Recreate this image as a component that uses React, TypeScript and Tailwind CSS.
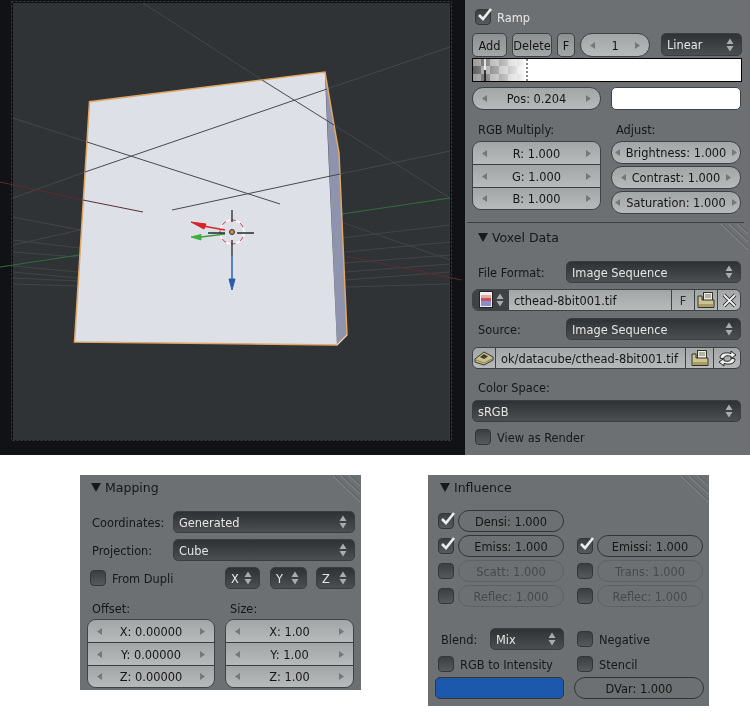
import React from "react";

const numBg = "bg-linear-to-b from-[#a3a6a7] to-[#b7babb]";
const btnBg = "bg-linear-to-b from-[#8e9192] to-[#a4a7a8]";
const ddBg = "bg-linear-to-b from-[#2f3234] to-[#4c4f51]";

function Updown({ color = "#a9acad" }: { color?: string }) {
  return (
    <svg width="8" height="14" viewBox="0 0 8 14" className="shrink-0">
      <path d="M4 0.5 L7.5 6 L0.5 6 Z M4 13.5 L7.5 8 L0.5 8 Z" fill={color} />
    </svg>
  );
}

function Dropdown({ label, className = "", h = "h-[22px]" }: { label: string; className?: string; h?: string }) {
  return (
    <div className={`${h} ${ddBg} rounded-[5px] border border-[#3a3c3e] flex items-center justify-between pl-[5px] pr-[7px] text-[#e4e5e5] ${className}`}>
      <span>{label}</span>
      <Updown />
    </div>
  );
}

function Tri({ dir, color = "#75787a" }: { dir: "l" | "r"; color?: string }) {
  return (
    <svg width="5" height="7" viewBox="0 0 5 7" className="shrink-0">
      <path d={dir === "l" ? "M0 3.5 L5 0 L5 7 Z" : "M5 3.5 L0 0 L0 7 Z"} fill={color} />
    </svg>
  );
}

function Num({ label, className = "", px = "px-[9px]", radius = "rounded-[11px]" }: { label: string; className?: string; px?: string; radius?: string }) {
  return (
    <div className={`h-[23px] ${numBg} ${radius} border border-[#3f4244] flex items-center justify-between ${px} ${className}`}>
      <Tri dir="l" />
      <span className="text-[#141515] whitespace-nowrap">{label}</span>
      <Tri dir="r" />
    </div>
  );
}

function Group({ labels, className = "" }: { labels: string[]; className?: string }) {
  return (
    <div className={`rounded-[9px] border border-[#3f4244] overflow-hidden flex flex-col ${className}`}>
      {labels.map((l, i) => (
        <div key={l} className={`${i === 1 ? "h-[23px]" : "h-[22px]"} ${numBg} flex items-center justify-between px-[9px] ${i ? "border-t border-[#3a3c3e]" : ""}`}>
          <Tri dir="l" />
          <span className="text-[#141515]">{l}</span>
          <Tri dir="r" />
        </div>
      ))}
    </div>
  );
}

function Check({ on = false, label, className = "" }: { on?: boolean; label?: string; className?: string }) {
  return (
    <div className={`flex items-center ${className}`}>
      <div className="relative w-[16px] h-[16px] shrink-0 rounded-[4px] border border-[#333638] bg-linear-to-b from-[#3c3f41] to-[#565a5c]">
        {on && (
          <svg width="18" height="17" viewBox="0 0 18 17" className="absolute left-0 top-[-3px]">
            <path d="M3 8 L7 12 L15 2" fill="none" stroke="#eceded" strokeWidth="2.6" />
          </svg>
        )}
      </div>
      {label && <span className="ml-[6px] whitespace-nowrap text-[#16181a]">{label}</span>}
    </div>
  );
}

function Hatch() {
  return (
    <svg width="32" height="28" viewBox="0 0 32 28" className="absolute right-0 top-0">
      <path d="M4 1 L31 27 M12 1 L31 19 M20 1 L31 11" stroke="#85888a" strokeWidth="1" fill="none" />
      <path d="M6 1 L31 25 M14 1 L31 17 M22 1 L31 9" stroke="#5f6264" strokeWidth="1" fill="none" />
    </svg>
  );
}

function Header({ label }: { label: string }) {
  return (
    <div className="flex items-center h-[18px] text-[12.5px] text-[#15171a]">
      <svg width="10" height="9" viewBox="0 0 10 9" className="mr-[4px]">
        <path d="M0 0 H10 L5 9 Z" fill="#17191b" />
      </svg>
      <span>{label}</span>
    </div>
  );
}

function FolderIcon() {
  return (
    <svg width="18" height="17" viewBox="0 0 18 17">
      <rect x="6.5" y="0.5" width="9" height="8" fill="#ececdf" stroke="#33332a" />
      <path d="M8 3 H14 M8 5 H14" stroke="#77776a" strokeWidth="1" />
      <path d="M1 4 H5 V8 H17 V15.5 H1 Z" fill="#cfc48f" stroke="#33332a" strokeWidth="1" />
      <path d="M2 12 H16 V15 H2 Z" fill="#a99c66" />
    </svg>
  );
}

function ImageIcon() {
  return (
    <svg width="15" height="18" viewBox="0 0 15 18">
      <rect x="0.5" y="0.5" width="13" height="16" fill="#f0eeee" stroke="#222" />
      <rect x="2" y="4" width="10" height="3" fill="#e8a8a8" />
      <rect x="2" y="7" width="10" height="3" fill="#c8505c" />
      <rect x="2" y="10" width="10" height="5" fill="#8c8ec8" />
    </svg>
  );
}

function DiskIcon() {
  return (
    <svg width="20" height="16" viewBox="0 0 20 16">
      <path d="M1 9 L10 2 L19 7 L19 10 L10 15 L1 12 Z" fill="#c9bf8a" stroke="#36362a" strokeWidth="1" />
      <path d="M6 7 L10 4 L14 6.5 L10 9 Z" fill="#3e3e30" />
      <path d="M2 10 L10 13 L18 9" stroke="#8c8358" fill="none" />
    </svg>
  );
}

function RefreshIcon() {
  return (
    <svg width="19" height="17" viewBox="0 0 19 17" fill="none">
      <path d="M2 8 C2 3 8 2 13 3.5 L13 1 L18 5 L13 8.5 L13 6.3 C9 5 6 6 5.5 9 Z" fill="#f0f0f0" stroke="#222" strokeWidth="1" />
      <path d="M17 9 C17 14 11 15 6 13.5 L6 16 L1 12 L6 8.5 L6 10.7 C10 12 13 11 13.5 8 Z" fill="#f0f0f0" stroke="#222" strokeWidth="1" />
    </svg>
  );
}

function Viewport() {
  const faint = "#454749";
  const faint2 = "#424547";
  return (
    <div className="w-[465px] h-[455px] shrink-0 bg-[#101216]">
      <svg width="465" height="455" viewBox="0 0 465 455">
        <rect x="13" y="3" width="437" height="437" fill="#303336" />
        <rect x="11.5" y="1.5" width="440" height="439" fill="none" stroke="#3c3f42" strokeDasharray="2 2" />
        <g stroke={faint} strokeWidth="1" fill="none">
          <path d="M143 3 L262 80 M334 125 L450 198" />
          <path d="M13 118 L87 142" />
          <path d="M13 198 L85 172 M327 89 L450 47" />
          <path d="M340 174 L450 151" />
        </g>
        <g stroke={faint2} strokeWidth="1" fill="none">
          <path d="M13 217 L80 230 M13 245 L80 230 M13 240 L80 248 M13 252 L78 257 M13 266 L78 272 M13 272 L78 278 M13 278 L78 281 M13 284 L78 286" />
          <path d="M341 222 L450 260 M342 238 L450 225 M345 252 L450 242 M345 263 L450 255 M345 272 L450 264 M345 280 L450 272 M345 287 L450 284" />
        </g>
        <path d="M0 182 L83 200" stroke="#5e2a30" strokeWidth="1" />
        <path d="M345 256 L462 280" stroke="#5e2a30" strokeWidth="1" />
        <path d="M0 267 L79 255" stroke="#2d6e40" strokeWidth="1.2" />
        <path d="M335 215 L450 198" stroke="#2d6e40" strokeWidth="1.2" />
        <path d="M325 72 L334 125 L339 153 L347 335 L337 345 Z" fill="#8e94ae" />
        <path d="M74.5 342 L89.5 101.7 L325 72 L326 100 L328 147 L337 345 Z" fill="#dde0e6" />
        <path d="M74.5 342 L89.5 101.7 L325 72 L334 125 L339 153 L347 335 L337 345 Z" fill="none" stroke="#e0a766" strokeWidth="1.5" />
        <path d="M337 345 L347 335" stroke="#dfe1e6" strokeWidth="1" />
        <g stroke="#46494e" strokeWidth="1" fill="none">
          <path d="M87 142 L280 204" />
          <path d="M85 172 L327 89" />
          <path d="M262 80 L334 125" />
          <path d="M172 210 L340 174" />
        </g>
        <path d="M83 200 L143 212" stroke="#5a3038" strokeWidth="1" />
        <circle cx="232" cy="232" r="12" fill="none" stroke="#ffffff" strokeWidth="1.5" strokeDasharray="5 5" />
        <circle cx="232" cy="232" r="12" fill="none" stroke="#d8404a" strokeWidth="1" strokeDasharray="5 5" strokeDashoffset="5" />
        <path d="M203 226 L225 230" stroke="#d02a30" strokeWidth="1.4" />
        <path d="M191 222 L206 224 L204 229 Z" fill="#dc2028" stroke="#dc2028" />
        <path d="M201 237 L225 234" stroke="#3a9a3e" strokeWidth="1.4" />
        <path d="M191 237 L201 234.5 L201 240 Z" fill="#3fae42" stroke="#3fae42" />
        <path d="M232 256 L232 282" stroke="#2a62b8" strokeWidth="1.5" />
        <path d="M229 279 L235 279 L232 290 Z" fill="#2a5cb0" stroke="#2a5cb0" />
        <g stroke="#26282c" strokeWidth="1.3">
          <path d="M232 210 L232 222 M232 240 L232 256 M208 233 L225 233 M237 233 L254 233" />
        </g>
        <circle cx="232" cy="232" r="2.5" fill="#c88a48" stroke="#333" strokeWidth="1" />
      </svg>
    </div>
  );
}

function SidePanel() {
  return (
    <div className="relative w-[285px] h-[455px] shrink-0 bg-[#6d7072] pl-[7px] pr-[8px]">
      <Check on label="Ramp" className="h-[16px] mt-[9px] ml-[3px] [&>span]:text-[#e6e7e7]" />
      <div className="flex mt-[8px] h-[24px] items-stretch">
        <div className={`w-[35px] ${btnBg} rounded-[5px] border border-[#3f4244] flex items-center justify-center text-[#141515]`}><span>Add</span></div>
        <div className={`w-[40px] ml-[5px] ${btnBg} rounded-[5px] border border-[#3f4244] flex items-center justify-center text-[#141515] overflow-hidden`}><span>Delete</span></div>
        <div className={`w-[18px] ml-[5px] ${btnBg} rounded-[5px] border border-[#3f4244] flex items-center justify-center text-[#141515]`}><span>F</span></div>
        <Num label="1" className="w-[70px] ml-[5px] !h-[24px]" radius="rounded-[12px]" />
        <Dropdown label="Linear" className="w-[81px] ml-[11px]" h="h-[23px]" />
      </div>
      <svg width="270" height="24" viewBox="0 0 270 24" className="block mt-[1px]">
        <defs>
          <pattern id="chk" width="18" height="16" patternUnits="userSpaceOnUse">
            <rect width="18" height="16" fill="#5e5e5e" />
            <rect width="9" height="8" fill="#9a9a9a" />
            <rect x="9" y="8" width="9" height="8" fill="#9a9a9a" />
          </pattern>
          <linearGradient id="fade" x1="0" x2="1" y1="0" y2="0">
            <stop offset="0" stopColor="#fff" stopOpacity="0" />
            <stop offset="1" stopColor="#fff" stopOpacity="1" />
          </linearGradient>
        </defs>
        <rect width="270" height="24" fill="#fff" />
        <rect x="0" y="0" width="55" height="24" fill="url(#chk)" />
        <rect x="0" y="0" width="55" height="24" fill="url(#fade)" />
        <path d="M13 1 V12" stroke="#fff" strokeWidth="1.5" />
        <path d="M13 12 V23" stroke="#111" strokeWidth="1.5" />
        <path d="M55 1 V23" stroke="#111" strokeWidth="1" strokeDasharray="2 2" />
        <rect x="0.5" y="0.5" width="269" height="23" fill="none" stroke="#000" />
      </svg>
      <div className="flex mt-[5px]">
        <Num label="Pos: 0.204" className="w-[129px]" />
        <div className="w-[130px] h-[23px] ml-[10px] bg-white rounded-[5px] border border-[#3f4244]" />
      </div>
      <div className="flex mt-[10px] h-[18px] items-center text-[#15171a]">
        <span className="w-[139px] pl-[6px]">RGB Multiply:</span>
        <span className="pl-[5px]">Adjust:</span>
      </div>
      <div className="flex mt-[3px]">
        <Group labels={["R: 1.000", "G: 1.000", "B: 1.000"]} className="w-[129px] self-start" />
        <div className="w-[130px] ml-[10px] flex flex-col gap-[2px]">
          <Num label="Brightness: 1.000" px="px-[3px]" />
          <Num label="Contrast: 1.000" px="px-[9px]" />
          <Num label="Saturation: 1.000" px="px-[3px]" />
        </div>
      </div>
      <div className="h-px bg-[#3e4143] mt-[8px] -ml-[5px] w-[277px]" />
      <div className="relative">
        <div className="absolute right-[-7px] top-0"><Hatch /></div>
      </div>
      <div className="mt-[5px] ml-[6px]"><Header label="Voxel Data" /></div>
      <div className="flex items-center mt-[15px]">
        <span className="w-[94px] pl-[6px] text-[#15171a]">File Format:</span>
        <Dropdown label="Image Sequence" className="w-[175px]" />
      </div>
      <div className="flex mt-[6px] h-[22px] w-[269px] rounded-[6px] border border-[#3f4244] overflow-hidden text-[#141515]">
        <div className="w-[36px] bg-[#3f4244] flex items-center justify-center gap-[2px]"><ImageIcon /><Updown /></div>
        <div className={`flex-1 ${numBg} flex items-center pl-[5px]`}><span>cthead-8bit001.tif</span></div>
        <div className={`w-[23px] ${numBg} border-l border-[#3f4244] flex items-center justify-center text-[#2a2c2d]`}><span>F</span></div>
        <div className={`w-[23px] ${numBg} border-l border-[#3f4244] flex items-center justify-center`}><FolderIcon /></div>
        <div className={`w-[23px] ${numBg} border-l border-[#3f4244] flex items-center justify-center`}>
          <svg width="15" height="15" viewBox="0 0 15 15">
            <path d="M2 2 L13 13 M13 2 L2 13" stroke="#222" strokeWidth="3.6" />
            <path d="M2 2 L13 13 M13 2 L2 13" stroke="#f2f2f2" strokeWidth="1.8" />
          </svg>
        </div>
      </div>
      <div className="flex items-center mt-[7px]">
        <span className="w-[94px] pl-[6px] text-[#15171a]">Source:</span>
        <Dropdown label="Image Sequence" className="w-[175px]" />
      </div>
      <div className="flex mt-[7px] h-[22px] w-[269px] rounded-[6px] border border-[#3f4244] overflow-hidden text-[#141515]">
        <div className={`w-[22px] ${numBg} flex items-center justify-center`}><DiskIcon /></div>
        <div className={`flex-1 ${numBg} border-l border-[#3f4244] flex items-center pl-[5px] whitespace-nowrap`}><span>ok/datacube/cthead-8bit001.tif</span></div>
        <div className={`w-[28px] ${numBg} border-l border-[#3f4244] flex items-center justify-center`}><FolderIcon /></div>
        <div className={`w-[27px] ${numBg} border-l border-[#3f4244] flex items-center justify-center`}><RefreshIcon /></div>
      </div>
      <div className="mt-[9px] h-[18px] pl-[6px] flex items-center text-[#15171a]"><span>Color Space:</span></div>
      <Dropdown label="sRGB" className="w-[269px] mt-[4px]" />
      <Check label="View as Render" className="mt-[7px] ml-[3px]" />
    </div>
  );
}

function Mapping() {
  return (
    <div className="relative w-[281px] h-[215px] shrink-0 bg-[#6d7072] px-[6px] pt-[3px]">
      <Hatch />
      <div className="ml-[5px]"><Header label="Mapping" /></div>
      <div className="flex items-center mt-[15px]">
        <span className="w-[87px] pl-[6px] text-[#15171a]">Coordinates:</span>
        <Dropdown label="Generated" className="w-[182px]" />
      </div>
      <div className="flex items-center mt-[6px]">
        <span className="w-[87px] pl-[6px] text-[#15171a]">Projection:</span>
        <Dropdown label="Cube" className="w-[182px]" />
      </div>
      <div className="flex items-center mt-[6px] h-[22px]">
        <Check label="From Dupli" className="ml-[4px] w-[135px]" />
        <Dropdown label="X" className="w-[35px]" />
        <Dropdown label="Y" className="w-[37px] ml-[10px]" />
        <Dropdown label="Z" className="w-[39px] ml-[9px]" />
      </div>
      <div className="flex mt-[10px] h-[18px] items-center text-[#15171a]">
        <span className="w-[144px] pl-[6px]">Offset:</span>
        <span>Size:</span>
      </div>
      <div className="flex mt-[2px] ml-[1px]">
        <Group labels={["X: 0.00000", "Y: 0.00000", "Z: 0.00000"]} className="w-[128px]" />
        <Group labels={["X: 1.00", "Y: 1.00", "Z: 1.00"]} className="w-[129px] ml-[10px]" />
      </div>
    </div>
  );
}

function Inf({ label, on, dim }: { label: string; on?: boolean; dim?: boolean }) {
  return (
    <div className="flex items-center h-[22px] w-[126px]">
      <Check on={on} />
      <div className={`ml-[4px] flex-1 h-[22px] rounded-[11px] border flex items-center justify-center ${dim ? "border-[#5f6264] text-[#47494b]" : "border-[#323436] text-[#141515]"}`}><span>{label}</span></div>
    </div>
  );
}

function Influence() {
  return (
    <div className="relative w-[281px] h-[231px] shrink-0 ml-[67px] bg-[#6d7072] pt-[3px]">
      <Hatch />
      <div className="ml-[12px]"><Header label="Influence" /></div>
      <div className="ml-[10px] mt-[14px] flex flex-col gap-[3px]">
        <Inf label="Densi: 1.000" on />
        <div className="flex gap-[13px]"><Inf label="Emiss: 1.000" on /><Inf label="Emissi: 1.000" on /></div>
        <div className="flex gap-[13px]"><Inf label="Scatt: 1.000" dim /><Inf label="Trans: 1.000" dim /></div>
        <div className="flex gap-[13px]"><Inf label="Reflec: 1.000" dim /><Inf label="Reflec: 1.000" dim /></div>
      </div>
      <div className="flex items-center mt-[21px] ml-[13px] h-[22px]">
        <span className="w-[49px] text-[#15171a]">Blend:</span>
        <Dropdown label="Mix" className="w-[74px]" />
        <Check label="Negative" className="ml-[13px]" />
      </div>
      <div className="flex items-center mt-[4px] ml-[10px] h-[20px]">
        <Check label="RGB to Intensity" className="w-[139px]" />
        <Check label="Stencil" />
      </div>
      <div className="flex mt-[3px] ml-[7px]">
        <div className="w-[129px] h-[22px] bg-[#1c58ac] rounded-[5px] border border-[#34373a]" />
        <div className="w-[130px] h-[22px] ml-[10px] rounded-[11px] border border-[#323436] flex items-center justify-center text-[#141515]"><span>DVar: 1.000</span></div>
      </div>
    </div>
  );
}

export default function App() {
  return (
    <div className="w-[750px] h-[717px] bg-white overflow-hidden font-['DejaVu_Sans',sans-serif] text-[11.4px] leading-none blur-[0.5px] [&_span]:pt-[3px]">
      <div className="flex h-[455px]">
        <Viewport />
        <SidePanel />
      </div>
      <div className="flex items-start pt-[20px] pl-[80px]">
        <Mapping />
        <Influence />
      </div>
    </div>
  );
}
